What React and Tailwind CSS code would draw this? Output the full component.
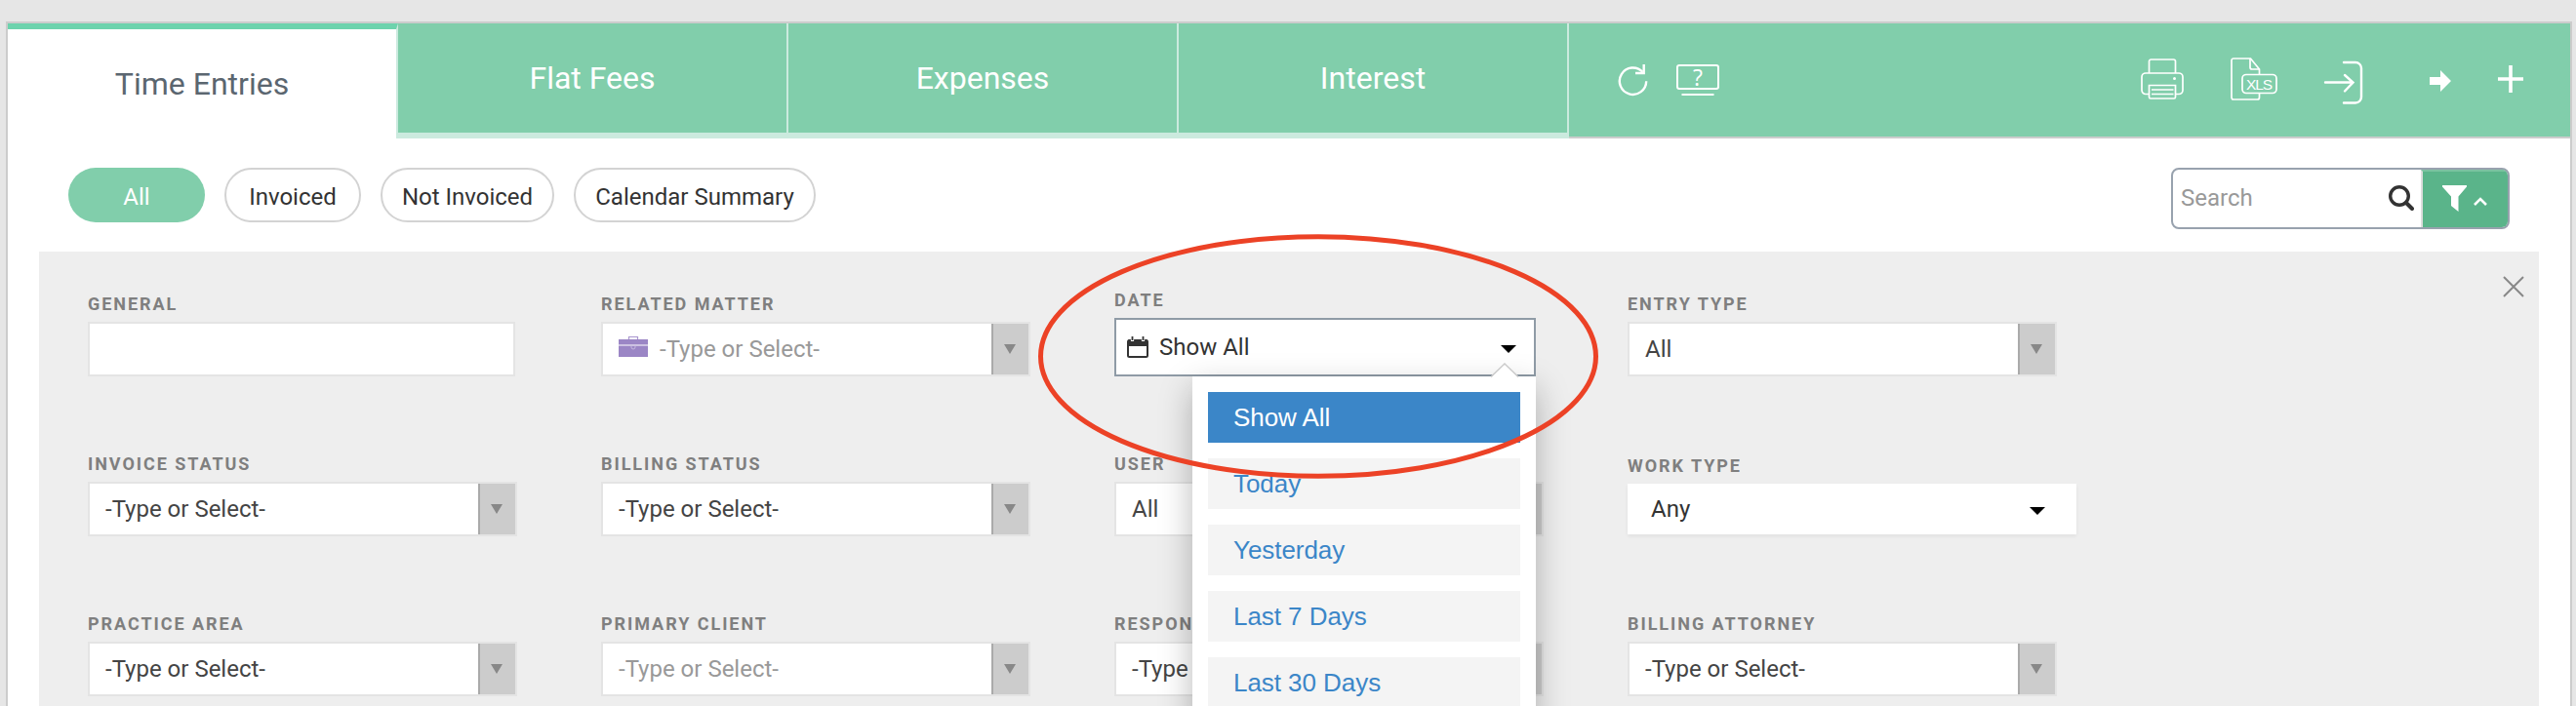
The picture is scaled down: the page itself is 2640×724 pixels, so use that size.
import { useState } from 'react'

const TABS = ['Time Entries', 'Flat Fees', 'Expenses', 'Interest']
const DATE_OPTIONS = ['Show All', 'Today', 'Yesterday', 'Last 7 Days', 'Last 30 Days']

// ── Icons ─────────────────────────────────────────────────────────────────────
function RefreshIcon() {
  return (
    <svg width="32" height="34" viewBox="0 0 32 34" fill="none" stroke="white" strokeWidth="2.4">
      <path d="M26.500 8.800A13.700 13.700 0 1 0 30.200 18.300" />
      <path d="M27.700 1v9H19" strokeWidth="2.400" />
    </svg>
  )
}

function HelpScreenIcon() {
  return (
    <svg width="46" height="34" viewBox="0 0 46 34" fill="none" stroke="white" strokeWidth="2" className="overflow-visible">
      <rect x="2" y="2" width="42" height="24" rx="2" />
      <path d="M6.500 32h33" />
      <text x="23" y="22.500" textAnchor="middle" fill="white" stroke="none" className="font-['Open_Sans'] text-[23px]">?</text>
    </svg>
  )
}

function PrinterIcon() {
  return (
    <svg width="44" height="42" viewBox="0 0 44 42" fill="none" stroke="white" strokeWidth="1.7">
      <path d="M8.500 15V3a2 2 0 0 1 2-2h23a2 2 0 0 1 2 2v12" />
      <path d="M8.500 36.500H5a4 4 0 0 1-4-4V19a4 4 0 0 1 4-4h34a4 4 0 0 1 4 4v13.500a4 4 0 0 1-4 4h-3.500" />
      <path d="M8.500 27.500h27v12a1.500 1.500 0 0 1-1.500 1.500h-24a1.500 1.500 0 0 1-1.500-1.500zM11 32h22.500M11 36.500h22.500" />
      <circle cx="34.500" cy="20.500" r="1.500" fill="white" stroke="none" />
    </svg>
  )
}

function XlsIcon() {
  return (
    <svg width="48" height="44" viewBox="0 0 48 44" fill="none" stroke="white" strokeWidth="1.7">
      <path d="M29.500 37v4a2 2 0 0 1-2 2h-24.500a2 2 0 0 1-2-2v-38a2 2 0 0 1 2-2h17.500l9 11v5" />
      <path d="M20 1v9a2 2 0 0 0 2 2h7.500" />
      <rect x="12" y="17.500" width="35" height="19" rx="4" />
      <text x="29.500" y="32.500" textAnchor="middle" textLength="27" fill="white" stroke="none" className="font-['Liberation_Sans'] text-[15.500px]">XLS</text>
    </svg>
  )
}

function ImportIcon() {
  return (
    <svg width="42" height="46" viewBox="0 0 42 46" fill="none" stroke="white" strokeWidth="2.400" strokeLinecap="round">
      <path d="M21 2h12a6 6 0 0 1 6 6v29.500a6 6 0 0 1-6 6h-12" />
      <path d="M2 22.500h28M22 15l8.500 7.500-8.500 9" />
    </svg>
  )
}

function BriefcaseIcon() {
  return (
    <svg width="30" height="22" viewBox="0 0 30 22" fill="none">
      <path d="M10.500 4V1.500h9V4" stroke="#a996cf" strokeWidth="1.200" />
      <rect y="4" width="30" height="18" fill="#9b86c5" />
      <path d="M0 10h30" stroke="white" strokeWidth="1" />
      <path d="M13 10.500v1.500a2 2 0 0 0 4 0v-1.500" stroke="#c4b8de" strokeWidth="1" />
    </svg>
  )
}

function CalendarIcon() {
  return (
    <svg width="22" height="22" viewBox="0 0 22 22" fill="none">
      <rect x="1" y="4" width="20" height="17" rx="1.500" stroke="#333" strokeWidth="2" />
      <path d="M1 3.500h20v6.500H1z" fill="#333" />
      <path d="M5.500 1v4M16.500 1v4" stroke="white" strokeWidth="3.200" />
      <path d="M5.500 0v4M16.500 0v4" stroke="#333" strokeWidth="1.800" />
    </svg>
  )
}

function Caret({ className }) {
  return <svg width="16" height="8" viewBox="0 0 16 8" className={className}><path d="M0 0h16L8 8z" /></svg>
}

// ── Header ────────────────────────────────────────────────────────────────────
function Header() {
  return (
    <div className="flex h-[118px] bg-[#81ceab]">
      <div className="flex w-[400px] items-start justify-center border-t-[6px] border-r-2 border-t-[#6dd3ad] border-r-[#cbeade] bg-white pt-8 text-[32px] leading-[48px] text-[#5b6670]">
        {TABS[0]}
      </div>
      {TABS.slice(1).map((tab) => (
        <div key={tab} className="flex w-[400px] justify-center border-r-2 border-b-6 border-[#cbeade] pt-8 text-[32px] leading-[48px] text-white">
          {tab}
        </div>
      ))}
      <div className="flex flex-1 border-b-2 border-[#ccc]">
        <div className="mt-[41px] ml-[49px]"><RefreshIcon /></div>
        <div className="mt-[41px] ml-[28px]"><HelpScreenIcon /></div>
        <div className="mt-[36px] ml-auto"><PrinterIcon /></div>
        <div className="mt-[35px] ml-[48px]"><XlsIcon /></div>
        <div className="mt-[38px] ml-[47px]"><ImportIcon /></div>
        <svg width="22" height="22" viewBox="0 0 22 22" fill="white" className="mt-[48px] ml-[67px]"><path d="M0 7h11V0l11 11-11 11v-7H0z" /></svg>
        <svg width="28" height="28" viewBox="0 0 28 28" stroke="white" strokeWidth="3.600" className="mt-[43px] mr-[47px] ml-[47px]"><path d="M1 14h26M14 0v28" /></svg>
      </div>
    </div>
  )
}

// ── Toolbar ───────────────────────────────────────────────────────────────────
function Pill({ active, width, children }) {
  return (
    <button className={`h-14 rounded-full pt-[3px] text-2xl ${width} ${active ? 'bg-[#81ceab] text-white' : 'border-2 border-[#d3d3d3] bg-white text-[#333]'}`}>
      {children}
    </button>
  )
}

function Toolbar() {
  return (
    <div className="flex h-[116px] items-start justify-between pt-[30px] pr-[62px] pl-[62px]">
      <div className="flex gap-5">
        <Pill active width="w-[140px]">All</Pill>
        <Pill width="w-[140px]">Invoiced</Pill>
        <Pill width="w-[178px]">Not Invoiced</Pill>
        <Pill width="w-[248px]">Calendar Summary</Pill>
      </div>
      <div className="flex h-[63px] w-[347px] overflow-hidden rounded-lg border-2 border-[#98a2ae] bg-white">
        <div className="flex flex-1 items-center justify-between pr-[7px] pl-[8px] text-2xl text-[#999]">
          <span className="-mt-[2px]">Search</span>
          <svg width="26" height="26" viewBox="0 0 26 26" fill="none" stroke="#333" className="mb-[2px]">
            <circle cx="11" cy="11" r="9.300" strokeWidth="3.400" />
            <path d="M18 18l6 6" strokeWidth="4" strokeLinecap="round" />
          </svg>
        </div>
        <div className="flex w-[89px] border-t-2 border-l-2 border-t-[#7bc2a0] border-l-[#ddd] bg-[#5ab48a] pt-[14px] pl-[20px]">
          <svg width="25" height="27" viewBox="0 0 25 27" fill="white"><path d="M0 0h25v1.500L16.500 11.500V27L9 21V11.500L0 1.500z" /></svg>
          <svg width="14" height="10" viewBox="0 0 14 10" fill="none" stroke="white" strokeWidth="2.600" className="mt-3 ml-[7px]"><path d="M1 8l6-6 6 6" /></svg>
        </div>
      </div>
    </div>
  )
}

// ── Filters ───────────────────────────────────────────────────────────────────
function Label({ children }) {
  return <div className="h-[30px] text-lg leading-[24px] font-bold tracking-[1.950px] whitespace-nowrap text-[#7f7f7f]">{children}</div>
}

function Select({ label, value, muted, icon }) {
  return (
    <div className="w-[440px]">
      <Label>{label}</Label>
      <div className="flex h-14 border-2 border-[#e4e4e4] bg-white text-2xl">
        <div className={`flex flex-1 items-center pl-4 ${muted ? 'text-[#999]' : 'text-[#444]'}`}>
          {icon && <span className="mr-3 -mt-[7px]">{icon}</span>}
          {value}
        </div>
        <div className="flex w-[38px] items-center justify-center border-l-2 border-[#aaa] bg-[#ccc]">
          <svg width="12" height="10" viewBox="0 0 12 10" fill="#888" className="mr-[2px]"><path d="M0 0h12L6 10z" /></svg>
        </div>
      </div>
    </div>
  )
}

function DateFilter() {
  const [selected, setSelected] = useState('Show All')
  return (
    <div className="relative -mt-1 w-[432px]">
      <Label>DATE</Label>
      <div className="flex h-[60px] items-center border-2 border-[#8f9ba6] bg-white pl-[11px] text-2xl text-[#333]">
        <CalendarIcon />
        <span className="-mt-px ml-[11px]">{selected}</span>
        <Caret className="mt-1 mr-[18px] ml-auto" />
      </div>
      <div className="absolute top-[90px] right-0 z-10 w-[352px] bg-white p-4 shadow-[0_12px_32px_rgba(0,0,0,0.28)]">
        <svg width="28" height="15" viewBox="0 0 28 15" className="absolute -top-[14px] right-[18px]">
          <path d="M0 15L14 1l14 14z" fill="white" />
          <path d="M0 14.500L14 1l14 13.500" fill="none" stroke="#ccc" strokeWidth="1.500" />
        </svg>
        <div className="flex flex-col gap-4 font-['Liberation_Sans'] text-[26px] tracking-[-0.050px]">
          {DATE_OPTIONS.map((o) => (
            <button key={o} onClick={() => setSelected(o)}
              className={`h-[52px] pl-[26px] text-left ${o === selected ? 'bg-[#3b86c8] text-white' : 'bg-[#f4f4f4] text-[#3b86c8]'}`}>
              {o}
            </button>
          ))}
        </div>
      </div>
      <svg width="576" height="252" viewBox="0 0 576 252" fill="none" className="absolute -top-[56px] -left-[79px] z-20">
        <ellipse cx="288" cy="125.500" rx="284.500" ry="122.800" stroke="#ec4226" strokeWidth="5" />
      </svg>
    </div>
  )
}

function FilterPanel() {
  return (
    <div className="relative mx-8 h-[466px] bg-[#eee] pt-[42px] pl-[50px]">
      <svg width="22" height="22" viewBox="0 0 22 22" stroke="#888" strokeWidth="2" className="absolute top-[25px] right-[15px]"><path d="M1 1l20 20M21 1L1 21" /></svg>
      <div className="grid auto-rows-[164px] grid-cols-[repeat(4,526px)]">
        <div className="w-[438px]">
          <Label>GENERAL</Label>
          <div className="h-14 border-2 border-[#e4e4e4] bg-white" />
        </div>
        <Select label="RELATED MATTER" value="-Type or Select-" muted icon={<BriefcaseIcon />} />
        <DateFilter />
        <Select label="ENTRY TYPE" value="All" />

        <Select label="INVOICE STATUS" value="-Type or Select-" />
        <Select label="BILLING STATUS" value="-Type or Select-" />
        <Select label="USER" value="All" />
        <div className="mt-[2px] w-[460px]">
          <Label>WORK TYPE</Label>
          <div className="flex h-[52px] items-center bg-white pl-6 text-2xl text-[#333] shadow-[0_2px_4px_rgba(0,0,0,0.06)]">
            Any
            <Caret className="mt-1 mr-8 ml-auto" />
          </div>
        </div>

        <Select label="PRACTICE AREA" value="-Type or Select-" />
        <Select label="PRIMARY CLIENT" value="-Type or Select-" muted />
        <Select label="RESPONSIBLE ATTORNEY" value="-Type or Select-" />
        <Select label="BILLING ATTORNEY" value="-Type or Select-" />
      </div>
    </div>
  )
}

export default function App() {
  return (
    <div className="h-[724px] w-[2640px] overflow-hidden bg-[#e6e6e6] pt-[22px] pr-1 pl-[6px] font-['Roboto',sans-serif]">
      <div className="h-[720px] border-2 border-[#ccc] bg-white">
        <Header />
        <Toolbar />
        <FilterPanel />
      </div>
    </div>
  )
}
